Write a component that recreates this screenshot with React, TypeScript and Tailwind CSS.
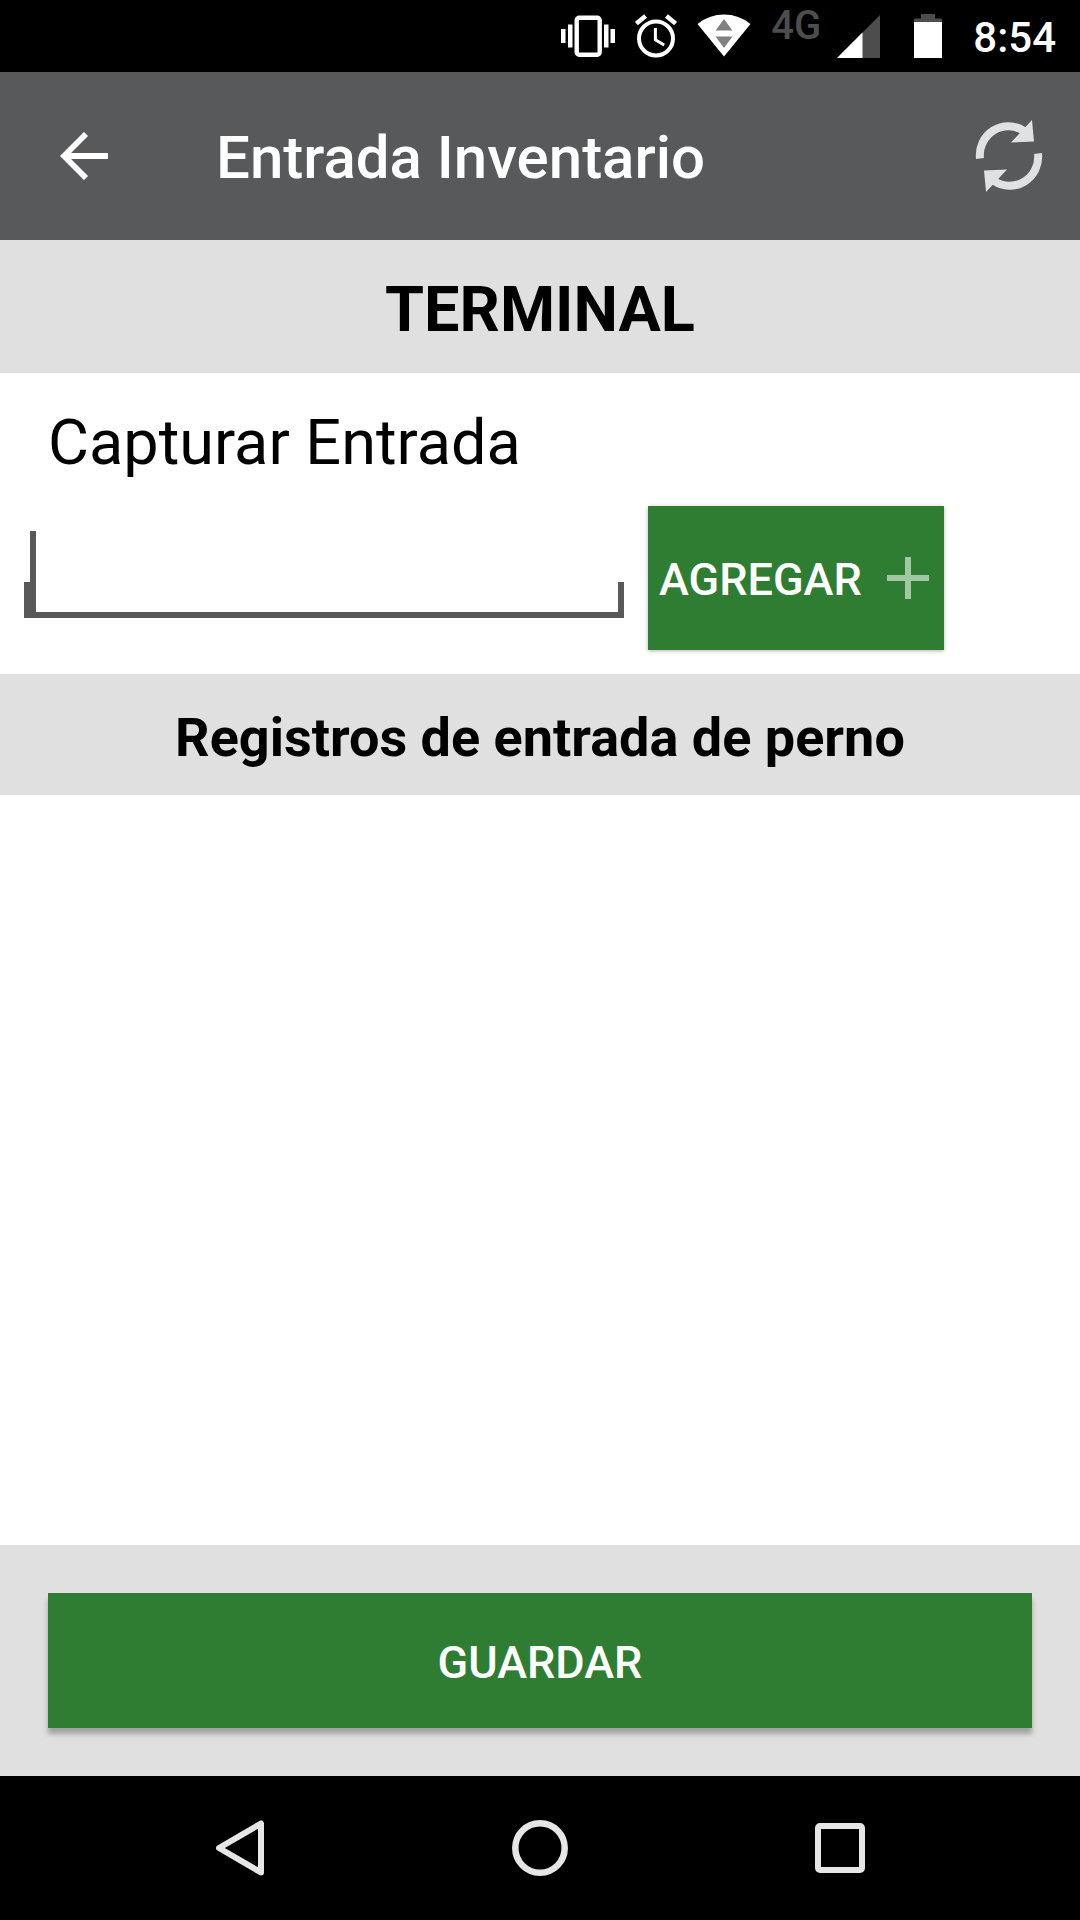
import React from "react";

function VibrateIcon() {
  return (
    <svg className="h-[42px] w-[54px]" viewBox="0 0 54 42" fill="#fff" aria-hidden="true">
      <rect x="0" y="14" width="4.5" height="14" />
      <rect x="7" y="9.5" width="4.5" height="23" />
      <rect x="43" y="9.5" width="4.5" height="23" />
      <rect x="49.5" y="14" width="4.5" height="14" />
      <rect x="15.7" y="2.7" width="23" height="37" rx="2.5" fill="none" stroke="#fff" strokeWidth="4.4" />
    </svg>
  );
}

function AlarmIcon() {
  return (
    <svg className="h-[44px] w-[42px]" viewBox="0 0 42 44" fill="none" stroke="#fff" aria-hidden="true">
      <circle cx="21" cy="24.5" r="17" strokeWidth="4" />
      <path d="M1.4 9.6 10.6 2M40.6 9.6 31.4 2" strokeWidth="4.6" />
      <path d="M20.4 14v11.8l8.8 5.2" strokeWidth="3" />
    </svg>
  );
}

function WifiIcon() {
  return (
    <svg className="h-[44px] w-[54px]" viewBox="0 0 54 44" aria-hidden="true">
      <path d="M0.5 10Q12 0.500 27 0.500t26.500 9.500L27 42.500Z" fill="#fff" />
      <path d="M18.6 16.500 27 5 35.4 16.500ZM18.6 22.500H35.4L27 34Z" fill="#808080" />
    </svg>
  );
}

function SignalIcon() {
  return (
    <svg className="h-[44px] w-[43px]" viewBox="0 0 43 44" aria-hidden="true">
      <path d="M0 44 43 1V44Z" fill="#4d4d4d" />
      <path d="M0 44 25.5 18.5V44Z" fill="#fff" />
    </svg>
  );
}

function BatteryIcon() {
  return (
    <svg className="h-[44px] w-[28px]" viewBox="0 0 28 44" aria-hidden="true">
      <path d="M7 0H21V4.5H28V10H0V4.5H7Z" fill="#4d4d4d" />
      <rect y="8" width="28" height="36" fill="#fff" />
    </svg>
  );
}

function StatusBar() {
  return (
    <div className="flex h-[72px] items-center justify-end bg-black pr-6 text-white">
      <div className="flex items-center gap-5">
        <VibrateIcon />
        <AlarmIcon />
        <WifiIcon />
      </div>
      <span className="ml-5 h-[44px] text-[40px] leading-[24px] font-medium text-[#4d4d4d]">4G</span>
      <div className="mr-[31px] ml-4 flex items-center gap-[34px]">
        <SignalIcon />
        <BatteryIcon />
      </div>
      <span className="pt-1 text-[42px] leading-[72px] font-medium">8:54</span>
    </div>
  );
}

function AppBar() {
  return (
    <header className="flex h-[168px] items-center bg-[#58595b] pr-[35px] pl-9 text-white">
      <button type="button" aria-label="Atrás" className="flex size-24 items-center justify-center">
        <svg className="size-[48px]" viewBox="0 0 48 48" fill="none" stroke="#fff" strokeWidth="5.8" aria-hidden="true">
          <path d="M48 24H5M26 2 4 24 26 46" />
        </svg>
      </button>
      <h1 className="ml-[84px] flex-1 pt-1 text-[60px] leading-[72px] font-medium">Entrada Inventario</h1>
      <button type="button" aria-label="Actualizar" className="flex size-[72px] items-center justify-center">
        <svg className="h-[74px] w-[68px]" viewBox="0 0 68 74" fill="#e0e1e1" aria-hidden="true">
          <path d="M5 39.5A28.500 29 0 0 1 49 12" fill="none" stroke="#e0e1e1" strokeWidth="8" />
          <path d="M57 1 59 22.500 36 23.500Z" />
          <path d="M63 34.500A28.500 29 0 0 1 19 62" fill="none" stroke="#e0e1e1" strokeWidth="8" />
          <path d="M11 73 9 51.500 32 50.500Z" />
        </svg>
      </button>
    </header>
  );
}

function EntryForm() {
  return (
    <form className="px-6 pt-[34px] pb-6" onSubmit={(e) => e.preventDefault()}>
      <label htmlFor="entrada" className="block px-6 text-[63px] leading-[72px]">
        Capturar Entrada
      </label>
      <div className="mt-[27px] flex items-stretch gap-6">
        <div className="relative w-[600px]">
          <input
            id="entrada"
            type="text"
            className="h-[112px] w-full bg-transparent px-3 pt-4 text-[54px] caret-[#595959] outline-none"
          />
          <span className="pointer-events-none absolute inset-x-0 bottom-8 h-9 border-x-6 border-b-6 border-[#595959]" />
          <span className="pointer-events-none absolute bottom-8 left-1.5 h-[87px] w-1.5 bg-[#595959]" />
        </div>
        <button
          type="submit"
          className="flex h-[144px] items-center gap-[25px] bg-[#2e7d32] pr-[15px] pl-[11px] text-[45px] font-medium text-white shadow-[0_1px_4px_rgba(0,0,0,0.3)]"
        >
          <span className="pt-1">AGREGAR</span>
          <svg className="size-[42px]" viewBox="0 0 42 42" stroke="#a0c8a2" strokeWidth="6" aria-hidden="true">
            <path d="M21 0V42M0 21H42" />
          </svg>
        </button>
      </div>
    </form>
  );
}

function NavBar() {
  return (
    <nav className="flex h-[144px] items-center justify-center gap-[204px] bg-black">
      <button type="button" aria-label="Volver" className="flex w-24 justify-center">
        <svg className="h-[56px] w-[48px]" viewBox="0 0 48 56" fill="none" stroke="#e6e6e6" strokeWidth="6" strokeLinejoin="round" aria-hidden="true">
          <path d="M45 3.500V52.500L3 28Z" />
        </svg>
      </button>
      <button type="button" aria-label="Inicio" className="flex w-24 justify-center">
        <svg className="size-[56px]" viewBox="0 0 56 56" fill="none" stroke="#e6e6e6" strokeWidth="6.500" aria-hidden="true">
          <circle cx="28" cy="28" r="24.700" />
        </svg>
      </button>
      <button type="button" aria-label="Recientes" className="flex w-24 justify-center">
        <svg className="size-[50px]" viewBox="0 0 50 50" fill="none" stroke="#e6e6e6" strokeWidth="6" aria-hidden="true">
          <rect x="3" y="3" width="44" height="44" rx="2" />
        </svg>
      </button>
    </nav>
  );
}

export default function App() {
  return (
    <div className="flex min-h-screen flex-col bg-white font-['Roboto',sans-serif] text-black">
      <StatusBar />
      <AppBar />
      <main className="flex flex-1 flex-col">
        <h2 className="bg-[#e0e0e0] pt-[34px] pb-[27px] text-center text-[63px] leading-[72px] font-bold">TERMINAL</h2>
        <EntryForm />
        <h3 className="bg-[#e0e0e0] pt-7 pb-[21px] text-center text-[54px] leading-[72px] font-bold">
          Registros de entrada de perno
        </h3>
        <section className="flex-1" aria-label="Registros" />
      </main>
      <footer className="bg-[#e0e0e0] p-12">
        <button
          type="button"
          className="h-[135px] w-full bg-[#2e7d32] pt-1 text-[45px] font-medium text-white shadow-[0_6px_5px_rgba(0,0,0,0.28)]"
        >
          GUARDAR
        </button>
      </footer>
      <NavBar />
    </div>
  );
}
